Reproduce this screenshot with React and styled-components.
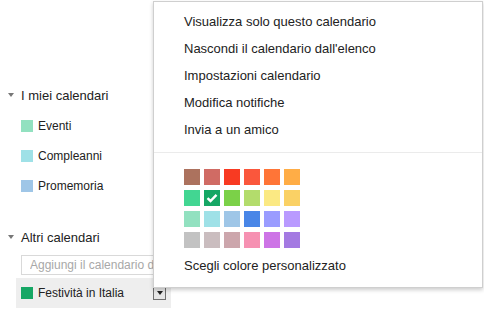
import React from 'react'
import styled, { createGlobalStyle } from 'styled-components'

const GlobalStyle = createGlobalStyle`
html, body {
    margin: 0;
    padding: 0;
    background: #fff;
}
body {
    font-family: "Liberation Sans", Arial, sans-serif;
    color: #222;
    width: 484px;
    height: 313px;
    overflow: hidden;
}
`

const myCalendars = [
    { name: 'Eventi', color: '#92e1c0' },
    { name: 'Compleanni', color: '#9fe1e7' },
    { name: 'Promemoria', color: '#9fc6e7' },
]

const menuItems = [
    'Visualizza solo questo calendario',
    "Nascondi il calendario dall'elenco",
    'Impostazioni calendario',
    'Modifica notifiche',
    'Invia a un amico',
]

const palette = [
    '#ac725e', '#d06b64', '#f83a22', '#fa573c', '#ff7537', '#ffad46',
    '#42d692', '#16a765', '#7bd148', '#b3dc6c', '#fbe983', '#fad165',
    '#92e1c0', '#9fe1e7', '#9fc6e7', '#4986e7', '#9a9cff', '#b99aff',
    '#c2c2c2', '#cabdbf', '#cca6ac', '#f691b2', '#cd74e6', '#a47ae2',
]

const App = () => {
    return (
        <Page>
            <GlobalStyle />
            <Sidebar>
                <SectionHeader>
                    <Caret />
                    I miei calendari
                </SectionHeader>
                <List>
                    {myCalendars.map(c => (
                        <Item key={c.name}>
                            <Swatch color={c.color} />
                            {c.name}
                        </Item>
                    ))}
                </List>
                <SectionHeader second>
                    <Caret />
                    Altri calendari
                </SectionHeader>
                <AddInput type="text" placeholder="Aggiungi il calendario di un amico" />
                <SelectedItem>
                    <Swatch color="#16a765" />
                    <Label>Festività in Italia</Label>
                    <DropButton><SmallCaret /></DropButton>
                </SelectedItem>
            </Sidebar>

            <Menu>
                {menuItems.map(t => (
                    <MenuItem key={t}>{t}</MenuItem>
                ))}
                <Separator />
                <ColorGrid>
                    {palette.map((c, i) => (
                        <ColorCell key={c + i} color={c}>
                            {i === 7 && (
                                <svg width="12" height="10" viewBox="0 0 12 10">
                                    <path d="M1.5 5.2 L4.5 8 L10.5 1.8" fill="none" stroke="#fff" strokeWidth="2.4" />
                                </svg>
                            )}
                        </ColorCell>
                    ))}
                </ColorGrid>
                <MenuItem last>Scegli colore personalizzato</MenuItem>
            </Menu>
        </Page>
    )
}

const Page = styled.div`
position: relative;
width: 484px;
height: 313px;
overflow: hidden;
`

const Sidebar = styled.div`
width: 172px;
padding-top: 87px;
display: flex;
flex-direction: column;
`

const SectionHeader = styled.div`
height: 16px;
display: flex;
align-items: center;
padding-left: 8px;
font-size: 13px;
color: #222;
margin-top: ${p => p.second ? '28px' : '0'};
`

const Caret = styled.span`
width: 0;
height: 0;
border-left: 3.5px solid transparent;
border-right: 3.5px solid transparent;
border-top: 4px solid #777;
margin-right: 7px;
`

const List = styled.div`
margin-top: 8px;
display: flex;
flex-direction: column;
`

const Item = styled.div`
height: 30px;
display: flex;
align-items: center;
padding-left: 21px;
font-size: 12px;
color: #222;
`

const Swatch = styled.span`
width: 12px;
height: 12px;
background: ${p => p.color};
margin-right: 5px;
flex-shrink: 0;
`

const AddInput = styled.input`
margin: 10px 0 0 21px;
width: 150px;
height: 20px;
box-sizing: border-box;
border: 1px solid #d9d9d9;
padding: 0 8px;
font-family: "Liberation Sans", Arial, sans-serif;
font-size: 12px;
outline: none;
&::placeholder {
    color: #a8a8a8;
}
`

const SelectedItem = styled.div`
margin: 3px 0 0 16px;
width: 155px;
height: 30px;
box-sizing: border-box;
background: #eeeeee;
display: flex;
align-items: center;
padding: 0 5px;
font-size: 12px;
color: #222;
`

const Label = styled.span`
flex: 1;
white-space: nowrap;
`

const DropButton = styled.div`
width: 13px;
height: 13px;
box-sizing: border-box;
border: 1px solid #6f6f6f;
background: #e6e6e6;
display: flex;
align-items: center;
justify-content: center;
flex-shrink: 0;
`

const SmallCaret = styled.span`
width: 0;
height: 0;
border-left: 3.5px solid transparent;
border-right: 3.5px solid transparent;
border-top: 4px solid #222;
`

const Menu = styled.div`
position: absolute;
left: 153px;
top: 1px;
width: 330px;
height: 287px;
box-sizing: border-box;
background: #fff;
border: 1px solid #cfcfcf;
box-shadow: 0 2px 4px rgba(0, 0, 0, 0.2);
padding-top: 6px;
display: flex;
flex-direction: column;
`

const MenuItem = styled.div`
height: 27px;
display: flex;
align-items: center;
padding-left: 30px;
font-size: 13px;
color: #222;
margin-top: ${p => p.last ? '4px' : '0'};
`

const Separator = styled.div`
height: 1px;
background: #ebebeb;
margin-top: 9px;
`

const ColorGrid = styled.div`
margin: 16px 0 0 30px;
display: grid;
grid-template-columns: repeat(6, 16px);
grid-auto-rows: 16px;
column-gap: 4px;
row-gap: 5px;
`

const ColorCell = styled.div`
background: ${p => p.color};
display: flex;
align-items: center;
justify-content: center;
`

export default App
